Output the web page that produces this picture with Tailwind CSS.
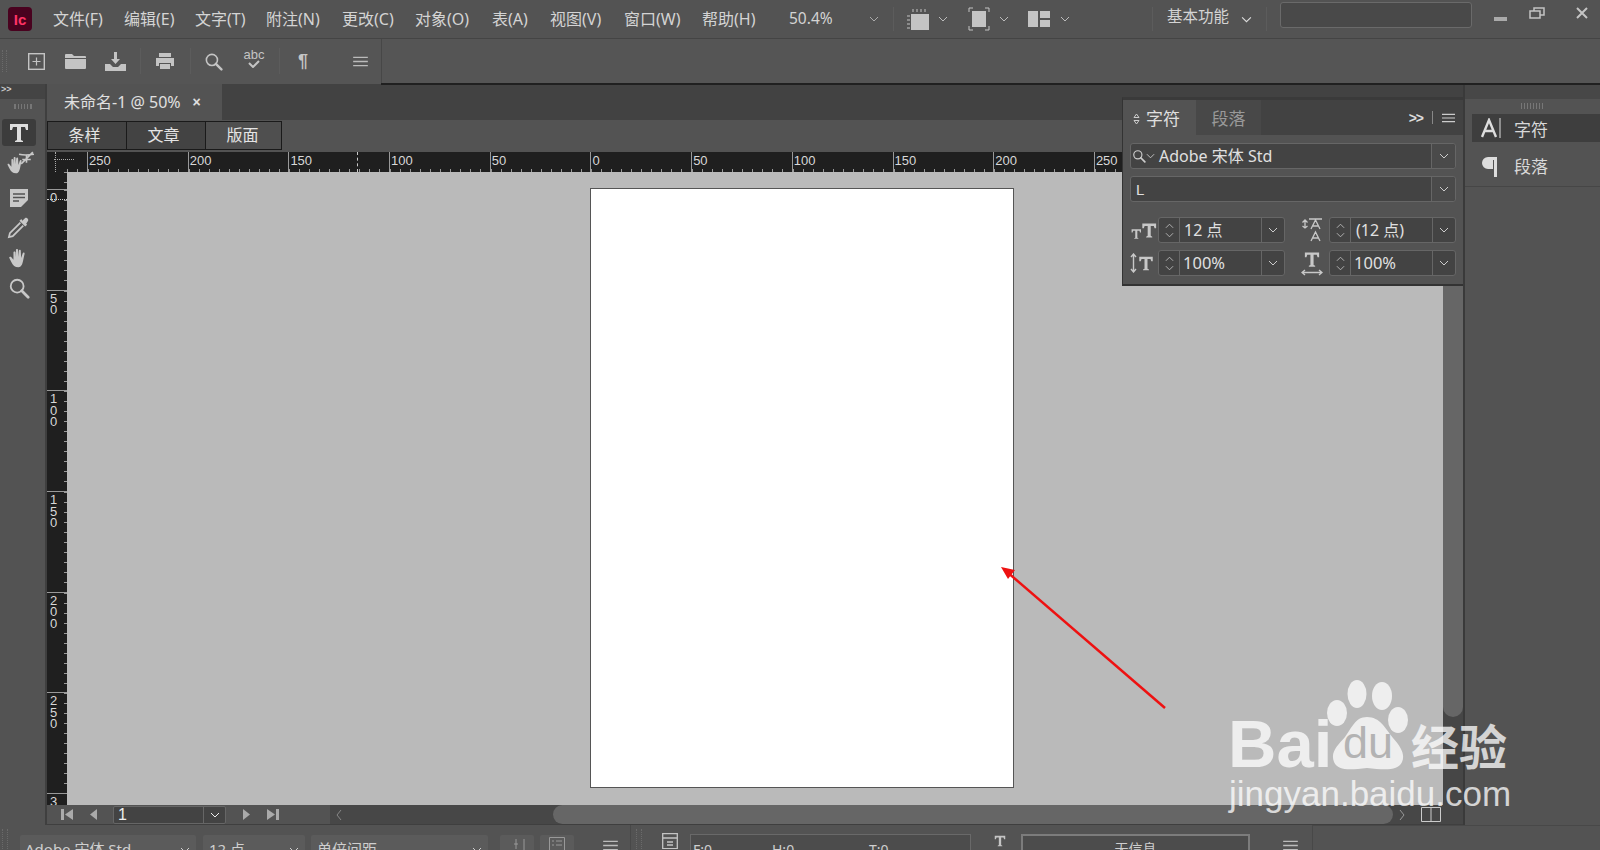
<!DOCTYPE html>
<html lang="zh"><head><meta charset="utf-8"><title>InDesign</title>
<script src="https://cdn.jsdelivr.net/npm/@tailwindcss/browser@4"></script></head>
<body class="bg-[#535353]">
<svg class="hidden"><defs>
<symbol id="chev" viewBox="0 0 10 6"><path d="M1 1l4 4 4-4" fill="none" stroke="currentColor" stroke-width="1"/></symbol>
<symbol id="up" viewBox="0 0 10 6"><path d="M1 5l4-4 4 4" fill="none" stroke="currentColor" stroke-width="1"/></symbol>
<symbol id="tee" viewBox="0 0 24 24"><path fill="currentColor" d="M3 3h18v6h-2l-1-3h-4v13l2 1v1H8v-1l2-1V6H6L5 9H3z"/></symbol>
<symbol id="burger" viewBox="0 0 16 12"><path d="M0 1.500h16M0 6h16M0 10.500h16" stroke="currentColor" stroke-width="1.400"/></symbol>
<symbol id="hand" viewBox="0 0 24 24"><path fill="currentColor" d="M12 22c-4 0-6-2-8-6L2 12c-.6-1.400 1-2 2-1l2.500 3V6c0-1.600 2.200-1.600 2.300 0l.4 5V3.500c0-1.600 2.300-1.600 2.300 0V11l.8-7c.2-1.600 2.400-1.300 2.200.3L14.900 12l1.600-5c.5-1.500 2.500-1 2.100.5L17 15c-.8 4-2 7-5 7z"/></symbol>
<symbol id="lens" viewBox="0 0 24 24"><circle cx="10" cy="10" r="7" fill="none" stroke="currentColor" stroke-width="2"/><path d="M15 15l7 7" stroke="currentColor" stroke-width="3" stroke-linecap="round"/></symbol>
</defs></svg>

<div class="relative w-[1600px] h-[850px] overflow-hidden flex flex-col bg-[#535353] text-[#d4d4d4] font-['Noto_Sans','Noto_Sans_CJK_SC',sans-serif]">

<!-- menu bar -->
<header class="h-[39px] shrink-0 flex items-center border-b border-[#444] bg-[#535353] text-[16px] leading-none">
  <div class="ml-[8px] w-[24px] h-[24px] rounded-[4px] bg-[#49021f] text-[#ff3366] flex items-center justify-center font-['Liberation_Sans'] font-bold text-[15px]">Ic</div>
  <nav class="ml-[21px] flex w-[731px] whitespace-nowrap">
    <span class="w-[71px]">文件(F)</span><span class="w-[71px]">编辑(E)</span><span class="w-[71px]">文字(T)</span><span class="w-[76px]">附注(N)</span><span class="w-[73px]">更改(C)</span><span class="w-[77px]">对象(O)</span><span class="w-[58px]">表(A)</span><span class="w-[74px]">视图(V)</span><span class="w-[78px]">窗口(W)</span><span class="w-[82px]">帮助(H)</span>
  </nav>
  <span class="ml-[5px] w-[80px] text-[15.500px]">50.4%</span>
  <svg class="w-[10px] h-[6px] text-[#aaa]"><use href="#chev"/></svg>
  <span class="ml-[14px] w-px h-[24px] bg-[#5c5c5c]"></span>
  <svg class="ml-[12px] w-[24px] h-[24px] text-[#c4c4c4]" viewBox="0 0 24 24"><rect x="5" y="7" width="18" height="16" fill="currentColor"/><path d="M7 2v3M11 2v3M15 2v3M19 2v3M1 9h3M1 13h3M1 17h3M1 21h3" stroke="currentColor"/></svg>
  <svg class="ml-[8px] w-[10px] h-[6px] text-[#bbb]"><use href="#chev"/></svg>
  <svg class="ml-[20px] w-[22px] h-[24px] text-[#c4c4c4]" viewBox="0 0 22 24"><rect x="4" y="4" width="14" height="16" fill="currentColor"/><path d="M1 5V1h4M17 1h4v4M1 19v4h4M17 23h4v-4" fill="none" stroke="currentColor"/></svg>
  <svg class="ml-[9px] w-[10px] h-[6px] text-[#bbb]"><use href="#chev"/></svg>
  <svg class="ml-[19px] w-[22px] h-[16px] text-[#c4c4c4]" viewBox="0 0 22 16"><path fill="currentColor" d="M0 0h10v16H0zM12 0h10v7H12zM12 9h10v7H12z"/></svg>
  <svg class="ml-[10px] w-[10px] h-[6px] text-[#bbb]"><use href="#chev"/></svg>
  <span class="ml-[82px] w-px h-[24px] bg-[#5c5c5c]"></span>
  <span class="ml-[14px] w-[61px] text-[15.500px] whitespace-nowrap -mt-[5px]">基本功能</span>
  <svg class="ml-[13px] w-[11px] h-[7px] text-[#ddd]"><use href="#chev"/></svg>
  <span class="ml-[14px] w-px h-[24px] bg-[#5c5c5c]"></span>
  <div class="ml-[13px] w-[192px] h-[26px] -mt-[9px] rounded-[3px] border border-[#6a6a6a] bg-[#494949]"></div>
  <svg class="ml-[22px] w-[13px] h-[4px] text-[#aaa]" viewBox="0 0 13 4"><rect width="13" height="4" fill="currentColor"/></svg>
  <svg class="ml-[22px] w-[16px] h-[12px] -mt-[13px] text-[#c4c4c4]" viewBox="0 0 16 12"><path d="M1 4h10v7H1zM5 4V1h10v7h-4" fill="none" stroke="currentColor" stroke-width="1.500"/></svg>
  <svg class="ml-[31px] w-[12px] h-[12px] -mt-[13px] text-[#c4c4c4]" viewBox="0 0 12 12"><path d="M1 1l10 10M11 1L1 11" stroke="currentColor" stroke-width="2"/></svg>
</header>

<!-- control bar -->
<section class="h-[45px] shrink-0 flex items-center bg-[#555] border-b border-[#555] relative text-[#c4c4c4]">
  <div class="ml-[2px] w-[5px] h-[22px] border-x border-dotted border-[#6a6a6a]"></div>
  <svg class="ml-[21px] w-[17px] h-[17px]" viewBox="0 0 17 17"><rect x=".7" y=".7" width="15.600" height="15.600" fill="none" stroke="currentColor" stroke-width="1.400"/><path d="M8.500 4.500v8M4.500 8.500h8" stroke="currentColor" stroke-width="1.200"/></svg>
  <svg class="ml-[20px] w-[21px] h-[16px]" viewBox="0 0 21 16"><path fill="currentColor" d="M0 2a1 1 0 011-1h6l2 2h11a1 1 0 011 1v1H0zM0 6h21v9a1 1 0 01-1 1H1a1 1 0 01-1-1z"/></svg>
  <svg class="ml-[19px] w-[21px] h-[19px]" viewBox="0 0 21 19"><path fill="currentColor" d="M9 0h3v7h3l-4.500 5L6 7h3zM0 12h5l3 3h5l3-3h5v7H0z"/></svg>
  <span class="ml-[14px] w-px h-[26px] bg-[#5c5c5c]"></span>
  <svg class="ml-[15px] w-[18px] h-[16px]" viewBox="0 0 18 16"><path fill="currentColor" d="M3 0h12v4H3zM0 5h18v8h-3v-3H3v3H0z"/><path fill="currentColor" d="M4 11h10v5H4z"/></svg>
  <span class="ml-[16px] w-px h-[26px] bg-[#5c5c5c]"></span>
  <svg class="ml-[13px] w-[19px] h-[19px]"><use href="#lens"/></svg>
  <div class="ml-[20px] w-[22px] h-[24px] flex flex-col items-center leading-none -mt-[3px]"><span class="text-[13px] font-['Liberation_Sans']">abc</span><svg class="w-[12px] h-[8px] -mt-[1px]" viewBox="0 0 12 8"><path d="M1 3l4 4 6-6" fill="none" stroke="currentColor" stroke-width="2"/></svg></div>
  <span class="ml-[14px] w-px h-[26px] bg-[#5c5c5c]"></span>
  <span class="ml-[18px] text-[18px] font-bold leading-none font-['Liberation_Sans'] w-[12px]">¶</span>
  <svg class="ml-[43px] w-[15px] h-[11px] text-[#bbb]"><use href="#burger"/></svg>
  <span class="absolute left-[381px] top-0 h-[45px] w-px bg-[#474747]"></span>
  <span class="absolute left-[381px] right-0 top-[44px] h-[2px] bg-[#202020]"></span>
</section>

<!-- work area -->
<main class="flex-1 min-h-0 flex">
  <!-- tools -->
  <aside class="w-[47px] shrink-0 border-r-2 border-[#3f3f3f] text-[#c8c8c8] flex flex-col">
    <div class="h-[15px] bg-[#444] text-[9px] leading-[11px] pl-[1px] text-[#ccc] font-['Liberation_Sans'] font-bold">&gt;&gt;</div>
    <div class="mx-auto mt-[5px] w-[18px] h-[5px] border-x border-dotted border-[#777] bg-[repeating-linear-gradient(90deg,#777_0,#777_1px,transparent_1px,transparent_3px)]"></div>
    <div class="mt-[10px] ml-[2px] w-[34px] h-[27px] bg-[#3c3c3c] rounded-[3px] flex items-center justify-center"><svg class="w-[24px] h-[24px] text-[#ddd]"><use href="#tee"/></svg></div>
    <div class="ml-[6px] h-[34px] w-[26px] relative flex items-center"><svg class="w-[20px] h-[22px] mt-[3px]"><use href="#hand"/></svg><svg class="absolute left-[12px] top-[4px] w-[17px] h-[17px]" viewBox="0 0 16 16"><path d="M3 13L14 2M1 4c4 1 8 1 14 0M8 4v8M4 9h8" fill="none" stroke="currentColor" stroke-width="1.500"/></svg></div>
    <svg class="ml-[10px] mt-[9px] w-[18px] h-[18px]" viewBox="0 0 18 18"><path fill="currentColor" d="M0 0h18v11l-7 7H0z"/><path d="M3 5h12M3 8.500h12M3 12h6" stroke="#535353" stroke-width="1.400"/></svg>
    <svg class="ml-[7px] mt-[9px] w-[23px] h-[23px]" viewBox="0 0 24 24"><path d="M14 7L3 18l-1 4 4-1L17 10" fill="none" stroke="currentColor" stroke-width="1.800"/><path fill="currentColor" d="M13 5l6 6 2-2-1-1 2-3c1-2-2-4-3-3l-3 3-1-2z"/></svg>
    <svg class="ml-[7px] mt-[8px] w-[23px] h-[22px]"><use href="#hand"/></svg>
    <svg class="ml-[8px] mt-[8px] w-[22px] h-[22px]"><use href="#lens"/></svg>
  </aside>

  <!-- document column -->
  <div class="w-[1418px] shrink-0 flex flex-col min-h-0 border-r-2 border-[#3a3a3a]">
    <!-- tabs -->
    <div class="h-[36px] shrink-0 bg-[#424242] flex">
      <div class="w-[175px] bg-[#535353] flex items-center pl-[17px] text-[16px] text-[#e0e0e0] whitespace-nowrap">未命名-1 @ 50%<span class="ml-[12px] text-[14px] font-bold font-['Liberation_Sans']">×</span></div>
    </div>
    <!-- view tabs -->
    <div class="h-[32px] shrink-0 flex items-start pt-[1px] text-[16px] leading-none text-[#e4e4e4]">
      <span class="w-[80px] h-[29px] flex items-center justify-center pr-[5px] pb-[2px] bg-[#434343] border border-[#1a1a1a]">条样</span>
      <span class="w-[79px] h-[29px] flex items-center justify-center pr-[5px] pb-[2px] bg-[#434343] border border-l-0 border-[#1a1a1a]">文章</span>
      <span class="w-[76px] h-[29px] flex items-center justify-center pr-[2px] pb-[2px] bg-[#4f4f4f] border border-l-0 border-[#1a1a1a]">版面</span>
    </div>
    <!-- horizontal ruler -->
    <div class="h-[20px] shrink-0 bg-[#1f1f1f] flex relative text-[13px] leading-[17px] text-[#d8d8d8] font-['Liberation_Sans'] overflow-hidden">
      <div class="w-[20px] shrink-0"></div>
      <div class="w-[20px] shrink-0 bg-[repeating-linear-gradient(90deg,#999_0,#999_1px,transparent_1px,transparent_10px)] bg-[length:100%_3px] bg-bottom bg-no-repeat"></div>
      <div class="flex">
        <span class="w-[100.7px] shrink-0 border-l border-[#999] pl-[1px] bg-[repeating-linear-gradient(90deg,#999_0,#999_1px,transparent_1px,transparent_10px)] bg-[length:100%_3px] bg-bottom bg-no-repeat">250</span>
        <span class="w-[100.7px] shrink-0 border-l border-[#999] pl-[1px] bg-[repeating-linear-gradient(90deg,#999_0,#999_1px,transparent_1px,transparent_10px)] bg-[length:100%_3px] bg-bottom bg-no-repeat">200</span>
        <span class="w-[100.7px] shrink-0 border-l border-[#999] pl-[1px] bg-[repeating-linear-gradient(90deg,#999_0,#999_1px,transparent_1px,transparent_10px)] bg-[length:100%_3px] bg-bottom bg-no-repeat">150</span>
        <span class="w-[100.7px] shrink-0 border-l border-[#999] pl-[1px] bg-[repeating-linear-gradient(90deg,#999_0,#999_1px,transparent_1px,transparent_10px)] bg-[length:100%_3px] bg-bottom bg-no-repeat">100</span>
        <span class="w-[100.7px] shrink-0 border-l border-[#999] pl-[1px] bg-[repeating-linear-gradient(90deg,#999_0,#999_1px,transparent_1px,transparent_10px)] bg-[length:100%_3px] bg-bottom bg-no-repeat">50</span>
        <span class="w-[100.7px] shrink-0 border-l border-[#999] pl-[1px] bg-[repeating-linear-gradient(90deg,#999_0,#999_1px,transparent_1px,transparent_10px)] bg-[length:100%_3px] bg-bottom bg-no-repeat">0</span>
        <span class="w-[100.7px] shrink-0 border-l border-[#999] pl-[1px] bg-[repeating-linear-gradient(90deg,#999_0,#999_1px,transparent_1px,transparent_10px)] bg-[length:100%_3px] bg-bottom bg-no-repeat">50</span>
        <span class="w-[100.7px] shrink-0 border-l border-[#999] pl-[1px] bg-[repeating-linear-gradient(90deg,#999_0,#999_1px,transparent_1px,transparent_10px)] bg-[length:100%_3px] bg-bottom bg-no-repeat">100</span>
        <span class="w-[100.7px] shrink-0 border-l border-[#999] pl-[1px] bg-[repeating-linear-gradient(90deg,#999_0,#999_1px,transparent_1px,transparent_10px)] bg-[length:100%_3px] bg-bottom bg-no-repeat">150</span>
        <span class="w-[100.7px] shrink-0 border-l border-[#999] pl-[1px] bg-[repeating-linear-gradient(90deg,#999_0,#999_1px,transparent_1px,transparent_10px)] bg-[length:100%_3px] bg-bottom bg-no-repeat">200</span>
        <span class="w-[100.7px] shrink-0 border-l border-[#999] pl-[1px] bg-[repeating-linear-gradient(90deg,#999_0,#999_1px,transparent_1px,transparent_10px)] bg-[length:100%_3px] bg-bottom bg-no-repeat">250</span>
      </div>
      <span class="absolute left-[310px] top-0 h-[20px] border-l border-dashed border-[#ccc]"></span>
      <span class="absolute left-[7px] top-[7px] w-[20px] border-t border-dotted border-[#aaa]"></span>
      <span class="absolute left-[8px] top-0 h-[20px] border-l border-dotted border-[#aaa]"></span>
    </div>
    <!-- ruler + canvas + vertical scrollbar -->
    <div class="flex-1 min-h-0 flex">
      <div class="w-[20px] shrink-0 bg-[#1f1f1f] flex flex-col overflow-hidden text-[13px] leading-[11.500px] text-[#d8d8d8] font-['Liberation_Sans'] relative">
        <div class="h-[17px] shrink-0 bg-[repeating-linear-gradient(180deg,#999_0,#999_1px,transparent_1px,transparent_10px)] bg-[length:3px_100%] bg-right bg-no-repeat"></div>
        <div class="h-[100.7px] shrink-0 border-t border-[#999] pt-[2px] pl-[3px] bg-[repeating-linear-gradient(180deg,#999_0,#999_1px,transparent_1px,transparent_10px)] bg-[length:3px_100%] bg-right bg-no-repeat">0</div>
        <div class="h-[100.7px] shrink-0 border-t border-[#999] pt-[2px] pl-[3px] bg-[repeating-linear-gradient(180deg,#999_0,#999_1px,transparent_1px,transparent_10px)] bg-[length:3px_100%] bg-right bg-no-repeat">5<br>0</div>
        <div class="h-[100.7px] shrink-0 border-t border-[#999] pt-[2px] pl-[3px] bg-[repeating-linear-gradient(180deg,#999_0,#999_1px,transparent_1px,transparent_10px)] bg-[length:3px_100%] bg-right bg-no-repeat">1<br>0<br>0</div>
        <div class="h-[100.7px] shrink-0 border-t border-[#999] pt-[2px] pl-[3px] bg-[repeating-linear-gradient(180deg,#999_0,#999_1px,transparent_1px,transparent_10px)] bg-[length:3px_100%] bg-right bg-no-repeat">1<br>5<br>0</div>
        <div class="h-[100.7px] shrink-0 border-t border-[#999] pt-[2px] pl-[3px] bg-[repeating-linear-gradient(180deg,#999_0,#999_1px,transparent_1px,transparent_10px)] bg-[length:3px_100%] bg-right bg-no-repeat">2<br>0<br>0</div>
        <div class="h-[100.7px] shrink-0 border-t border-[#999] pt-[2px] pl-[3px] bg-[repeating-linear-gradient(180deg,#999_0,#999_1px,transparent_1px,transparent_10px)] bg-[length:3px_100%] bg-right bg-no-repeat">2<br>5<br>0</div>
        <div class="h-[100.7px] shrink-0 border-t border-[#999] pt-[2px] pl-[3px]">3</div>
        <span class="absolute left-0 top-[27px] w-[20px] border-t border-dotted border-[#ccc]"></span>
      </div>
      <div class="w-[1376px] shrink-0 bg-[#bababa] pl-[523px] pt-[16px]">
        <div class="w-[424px] h-[600px] bg-white border border-[#555]"></div>
      </div>
      <div class="flex-1 bg-[#464646]"><div class="h-[545px] bg-[#666] rounded-b-[10px]"></div></div>
    </div>
    <!-- bottom scroller -->
    <div class="h-[20px] shrink-0 flex items-center bg-[#535353] text-[#aaa] border-b border-[#3f3f3f]">
      <svg class="ml-[14px] w-[12px] h-[11px]" viewBox="0 0 12 11"><path fill="currentColor" d="M0 0h3v11H0zM12 0v11L4 5.500z"/></svg>
      <svg class="ml-[17px] w-[7px] h-[11px]" viewBox="0 0 7 11"><path fill="currentColor" d="M7 0v11L0 5.500z"/></svg>
      <div class="ml-[16px] w-[113px] h-[18px] flex items-center bg-[#434343] border border-[#666] rounded-[2px] text-[#eee] text-[16px] leading-none font-['Liberation_Sans']">
        <span class="pl-[4px] flex-1">1</span>
        <span class="w-[22px] h-full border-l border-[#666] flex items-center justify-center"><svg class="w-[10px] h-[6px]"><use href="#chev"/></svg></span>
      </div>
      <svg class="ml-[17px] w-[7px] h-[11px]" viewBox="0 0 7 11"><path fill="currentColor" d="M0 0v11l7-5.500z"/></svg>
      <svg class="ml-[17px] w-[12px] h-[11px]" viewBox="0 0 12 11"><path fill="currentColor" d="M9 0h3v11H9zM0 0v11l8-5.500z"/></svg>
      <div class="ml-[51px] flex-1 h-full bg-[#474747] flex items-center">
        <svg class="ml-[6px] w-[6px] h-[12px] text-[#888]" viewBox="0 0 6 12"><path d="M5 1L1 6l4 5" fill="none" stroke="currentColor"/></svg>
        <div class="ml-[211px] w-[840px] h-full bg-[#666] rounded-[10px]"></div>
        <svg class="ml-[6px] w-[6px] h-[12px] text-[#999]" viewBox="0 0 6 12"><path d="M1 1l4 5-4 5" fill="none" stroke="currentColor"/></svg>
        <svg class="ml-[16px] w-[20px] h-[15px] text-[#ccc]" viewBox="0 0 20 15"><path d="M.5.500h19v14H.5zM10 .5v14" fill="none" stroke="currentColor"/></svg>
      </div>
    </div>
  </div>

  <!-- right dock -->
  <aside class="flex-1 flex flex-col text-[17px] leading-none text-[#d8d8d8]">
    <div class="h-[15px] bg-[#474747]"></div>
    <div class="mx-auto mt-[4px] w-[24px] h-[6px] bg-[repeating-linear-gradient(90deg,#777_0,#777_1px,transparent_1px,transparent_3px)]"></div>
    <div class="mt-[5px] ml-[7px] h-[28px] bg-[#3e3e3e] flex items-center">
      <svg class="ml-[9px] w-[20px] h-[20px] text-[#ddd]" viewBox="0 0 20 20"><path d="M1 19L8 2l7 17M4 13h8" fill="none" stroke="currentColor" stroke-width="2.400"/><path d="M19 0v20" stroke="currentColor"/></svg>
      <span class="ml-[13px] mt-[2px]">字符</span>
    </div>
    <div class="h-[45px] border-b border-[#464646] flex items-center pt-[5px]">
      <svg class="ml-[17px] w-[15px] h-[20px] text-[#ddd]" viewBox="0 0 15 20"><path fill="currentColor" d="M6 0h9v20h-3V3h-1v9H6a6 6 0 010-12z"/></svg>
      <span class="ml-[17px]">段落</span>
    </div>
  </aside>
</main>

<!-- status bar -->
<footer class="h-[25px] shrink-0 flex items-start pt-[10px] bg-[#535353] text-[15px] leading-none text-[#cfcfcf] overflow-hidden">
  <div class="w-[630px] shrink-0 flex items-start relative">
    <span class="absolute left-[2px] top-[-6px] w-[6px] h-[22px] border-x border-dotted border-[#6a6a6a]"></span>
    <div class="ml-[20px] w-[176px] h-[26px] bg-[#5b5b5b] rounded-[2px] flex pt-[7px] pl-[5px] justify-between pr-[6px]"><span>Adobe 宋体 Std</span><svg class="w-[10px] h-[6px] mt-[5px]"><use href="#chev"/></svg></div>
    <div class="ml-[7px] w-[102px] h-[26px] bg-[#5b5b5b] rounded-[2px] flex pt-[7px] pl-[6px] justify-between pr-[6px]"><span>12 点</span><svg class="w-[10px] h-[6px] mt-[5px]"><use href="#chev"/></svg></div>
    <div class="ml-[6px] w-[177px] h-[26px] bg-[#5b5b5b] rounded-[2px] flex pt-[7px] pl-[6px] justify-between pr-[6px]"><span>单倍间距</span><svg class="w-[10px] h-[6px] mt-[5px]"><use href="#chev"/></svg></div>
    <div class="ml-[12px] w-[34px] h-[26px] bg-[#5b5b5b] rounded-[2px] flex justify-center pt-[3px] pl-[6px]"><svg class="w-[14px] h-[14px] text-[#999]" viewBox="0 0 14 14"><path d="M3 1v10M11 1v13M1 6h4" stroke="currentColor" fill="none"/></svg></div>
    <div class="ml-[6px] w-[34px] h-[26px] bg-[#5b5b5b] rounded-[2px] flex justify-center pt-[2px]"><svg class="w-[16px] h-[16px] text-[#999]" viewBox="0 0 16 16"><path d="M.5.500h15v15H.5zM3 4h2M7 4h6M3 8h2M7 8h6" stroke="currentColor" fill="none"/></svg></div>
    <svg class="ml-[29px] mt-[5px] w-[15px] h-[11px] text-[#bbb]"><use href="#burger"/></svg>
  </div>
  <div class="w-[682px] shrink-0 flex items-start border-l border-[#484848] h-[40px] -mt-[10px] pt-[10px] relative">
    <span class="absolute left-[5px] top-[4px] w-[6px] h-[22px] border-x border-dotted border-[#6a6a6a]"></span>
    <svg class="ml-[31px] w-[16px] h-[16px] -mt-[2px] text-[#c4c4c4]" viewBox="0 0 16 16"><path d="M.7.700h14.600v15H.7zM.7 5h14.600M5 9h6M5 12h6" stroke="currentColor" stroke-width="1.300" fill="none"/></svg>
    <div class="ml-[12px] w-[281px] h-[26px] -mt-[1px] border border-[#696969] bg-[#4c4c4c] flex pt-[8px] pl-[2px] text-[14px]"><span class="w-[79px]">F:0</span><span class="w-[97px]">H:0</span><span>T:0</span></div>
    <svg class="ml-[22px] w-[14px] h-[14px] -mt-[1px] text-[#c4c4c4]"><use href="#tee"/></svg>
    <div class="ml-[14px] w-[229px] h-[26px] -mt-[1px] border-2 border-[#7c7c7c] bg-[#4c4c4c] text-center pt-[6px] text-[14px]">无信息</div>
    <svg class="ml-[33px] mt-[5px] w-[15px] h-[11px] text-[#bbb]"><use href="#burger"/></svg>
  </div>
  <div class="flex-1 h-[40px] -mt-[10px] border-l border-[#484848] border-t"></div>
</footer>

<!-- floating character panel -->
<section class="absolute left-[1122px] top-[97px] w-[341px] h-[189px] bg-[#535353] border-t-[3px] border-t-[#3a3a3a] border-b-2 border-b-[#333] border-l border-l-[#333] text-[#e0e0e0] text-[16px] leading-none">
  <div class="h-[35px] bg-[#424242] flex items-center">
    <div class="w-[73px] h-full bg-[#535353] flex items-center text-[17px] pt-[2px]"><svg class="ml-[10px] w-[7px] h-[12px] text-[#ccc]" viewBox="0 0 7 12"><path d="M3.500 1L6 4.500H1zM3.500 11L1 7.500h5z" fill="none" stroke="currentColor"/></svg><span class="ml-[6px]">字符</span></div>
    <div class="w-[65px] h-full bg-[#484848] flex items-center justify-center text-[#999] text-[17px] pt-[2px]">段落</div>
    <span class="ml-auto text-[14px] font-bold font-['Liberation_Sans'] text-[#ddd] tracking-[-1px]">&gt;&gt;</span>
    <span class="ml-[9px] w-px h-[13px] bg-[#888]"></span>
    <svg class="ml-[9px] mr-[8px] w-[13px] h-[10px] text-[#ccc]"><use href="#burger"/></svg>
  </div>
  <div class="pt-[8px] px-[7px] flex flex-col gap-[7px]">
    <div class="h-[26px] rounded-[3px] border border-[#666] bg-[#434343] flex items-center">
      <svg class="ml-[1px] w-[14px] h-[14px] text-[#ccc]"><use href="#lens"/></svg><svg class="w-[9px] h-[6px] text-[#ccc]"><use href="#chev"/></svg>
      <span class="ml-[4px] flex-1">Adobe 宋体 Std</span>
      <span class="w-[24px] h-full border-l border-[#666] flex items-center justify-center bg-[#4a4a4a] rounded-r-[3px]"><svg class="w-[10px] h-[6px] text-[#ccc]"><use href="#chev"/></svg></span>
    </div>
    <div class="h-[26px] rounded-[3px] border border-[#666] bg-[#434343] flex items-center">
      <span class="ml-[5px] flex-1 font-['Liberation_Sans'] text-[15px]">L</span>
      <span class="w-[24px] h-full border-l border-[#666] flex items-center justify-center bg-[#4a4a4a] rounded-r-[3px]"><svg class="w-[10px] h-[6px] text-[#ccc]"><use href="#chev"/></svg></span>
    </div>
    <div class="mt-[8px] h-[26px] flex items-center">
      <div class="w-[28px] flex items-end text-[#c8c8c8]"><svg class="w-[13px] h-[14px]"><use href="#tee"/></svg><svg class="-ml-[3px] w-[19px] h-[21px]"><use href="#tee"/></svg></div>
      <div class="w-[127px] h-full rounded-[3px] border border-[#666] bg-[#434343] flex items-center">
        <span class="w-[21px] h-full border-r border-[#666] flex flex-col items-center justify-center gap-[3px] text-[#bbb]"><svg class="w-[9px] h-[6px]"><use href="#up"/></svg><svg class="w-[9px] h-[6px]"><use href="#chev"/></svg></span>
        <span class="ml-[4px] flex-1 text-[16px]">12 点</span>
        <span class="w-[23px] h-full border-l border-[#666] flex items-center justify-center"><svg class="w-[10px] h-[6px] text-[#ccc]"><use href="#chev"/></svg></span>
      </div>
      <svg class="ml-[16px] w-[22px] h-[24px] text-[#c8c8c8]" viewBox="0 0 22 24"><path d="M4 2v8M1.500 4.500L4 2l2.500 2.500M1.500 8L4 10l2.500-2M8 1h13M10 11l4.500-9 4.500 9M12 8h5M10 23l4.500-9 4.500 9M12 20h5" fill="none" stroke="currentColor" stroke-width="1.300"/></svg>
      <div class="ml-[6px] w-[127px] h-full rounded-[3px] border border-[#666] bg-[#434343] flex items-center">
        <span class="w-[21px] h-full border-r border-[#666] flex flex-col items-center justify-center gap-[3px] text-[#bbb]"><svg class="w-[9px] h-[6px]"><use href="#up"/></svg><svg class="w-[9px] h-[6px]"><use href="#chev"/></svg></span>
        <span class="ml-[5px] flex-1 text-[16px]">(12 点)</span>
        <span class="w-[23px] h-full border-l border-[#666] flex items-center justify-center"><svg class="w-[10px] h-[6px] text-[#ccc]"><use href="#chev"/></svg></span>
      </div>
    </div>
    <div class="h-[26px] flex items-center">
      <div class="w-[28px] flex items-center text-[#c8c8c8]"><svg class="w-[7px] h-[20px]" viewBox="0 0 7 20"><path d="M3.500 1v18M1 4l2.500-3L6 4M1 16l2.500 3L6 16" fill="none" stroke="currentColor" stroke-width="1.400"/></svg><svg class="w-[18px] h-[21px]"><use href="#tee"/></svg></div>
      <div class="w-[127px] h-full rounded-[3px] border border-[#666] bg-[#434343] flex items-center">
        <span class="w-[21px] h-full border-r border-[#666] flex flex-col items-center justify-center gap-[3px] text-[#bbb]"><svg class="w-[9px] h-[6px]"><use href="#up"/></svg><svg class="w-[9px] h-[6px]"><use href="#chev"/></svg></span>
        <span class="ml-[3px] flex-1 text-[16.500px]">100%</span>
        <span class="w-[23px] h-full border-l border-[#666] flex items-center justify-center"><svg class="w-[10px] h-[6px] text-[#ccc]"><use href="#chev"/></svg></span>
      </div>
      <div class="ml-[16px] w-[22px] flex flex-col items-center text-[#c8c8c8]"><svg class="w-[20px] h-[19px]"><use href="#tee"/></svg><svg class="w-[22px] h-[7px]" viewBox="0 0 22 7"><path d="M1 3.500h20M4 1L1 3.500 4 6M18 1l3 2.500L18 6" fill="none" stroke="currentColor" stroke-width="1.400"/></svg></div>
      <div class="ml-[6px] w-[127px] h-full rounded-[3px] border border-[#666] bg-[#434343] flex items-center">
        <span class="w-[21px] h-full border-r border-[#666] flex flex-col items-center justify-center gap-[3px] text-[#bbb]"><svg class="w-[9px] h-[6px]"><use href="#up"/></svg><svg class="w-[9px] h-[6px]"><use href="#chev"/></svg></span>
        <span class="ml-[3px] flex-1 text-[16.500px]">100%</span>
        <span class="w-[23px] h-full border-l border-[#666] flex items-center justify-center"><svg class="w-[10px] h-[6px] text-[#ccc]"><use href="#chev"/></svg></span>
      </div>
    </div>
  </div>
</section>

<!-- annotation arrow and watermark -->
<svg class="absolute left-0 top-0 w-[1600px] h-[850px] pointer-events-none" viewBox="0 0 1600 850">
  <path d="M1165 708L1006 571" stroke="#ee1111" stroke-width="2.500" fill="none"/>
  <path d="M1001 567l14 3-7 9z" fill="#ee1111"/>
  <g fill="#fff" fill-opacity=".75">
    <ellipse cx="1337" cy="713" rx="10" ry="13"/>
    <ellipse cx="1357" cy="694" rx="9.500" ry="14"/>
    <ellipse cx="1382" cy="696" rx="10" ry="14"/>
    <ellipse cx="1398" cy="720" rx="10" ry="13"/>
    <path d="M1367 717C1380 717 1385 728 1393 738C1402 748 1405 755 1402 762C1398 771 1385 770 1367 768C1350 770 1338 771 1334 762C1330 752 1338 745 1345 737C1352 728 1355 717 1367 717Z"/>
  </g>
</svg>
<span class="absolute left-[1228px] top-[706px] text-[67px] leading-[76px] font-bold font-['Liberation_Sans'] text-white/75 pointer-events-none">Bai</span>
<span class="absolute left-[1343px] top-[717px] text-[45px] leading-[52px] font-['Liberation_Sans'] text-[#b3b3b3] pointer-events-none">du</span>
<span class="absolute left-[1411px] top-[714px] text-[48px] leading-[60px] font-bold font-['Noto_Sans_CJK_SC'] text-white/75 pointer-events-none">经验</span>
<span class="absolute left-[1229px] top-[772px] text-[35px] leading-[44px] font-['Liberation_Sans'] text-white/75 pointer-events-none">jingyan.baidu.com</span>
</div>
</body></html>
